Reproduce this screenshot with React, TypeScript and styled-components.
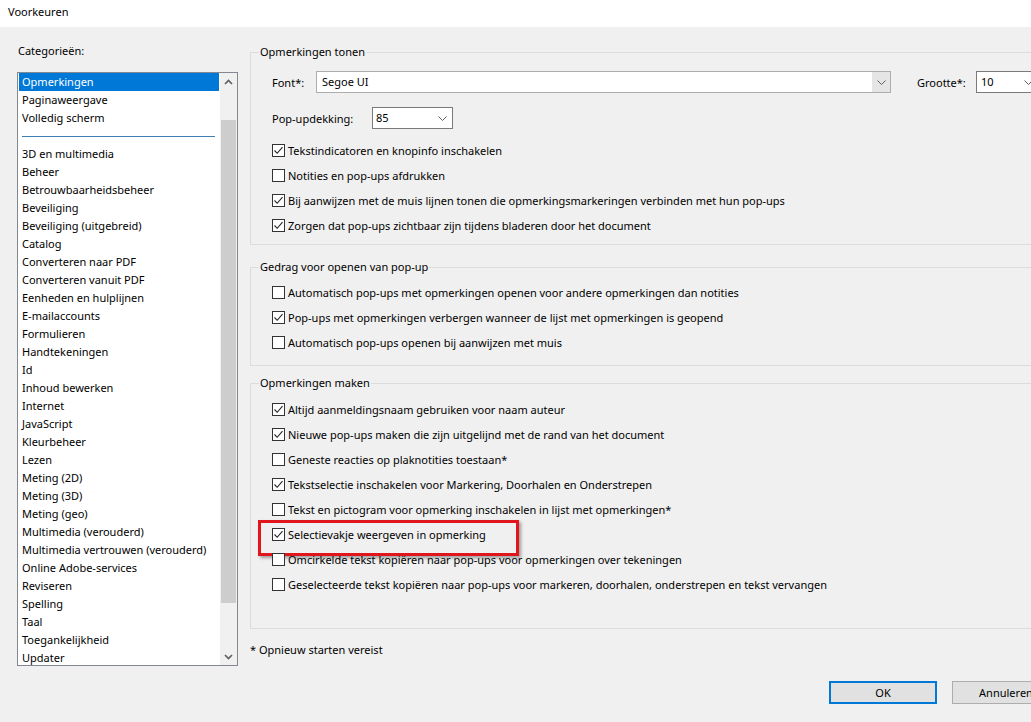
import React from "react";
import styled, { createGlobalStyle } from "styled-components";

const GlobalStyle = createGlobalStyle`
  html, body { margin: 0; padding: 0; width: 1031px; height: 722px; overflow: hidden; background: #f0f0f0; }
  body { font-family: "Noto Sans", "Open Sans", sans-serif; font-size: 11px; color: #000; }
  #root { height: 100%; }
  * { box-sizing: border-box; }
`;

const Window = styled.div`
  display: flex;
  flex-direction: column;
  width: 1031px;
  height: 722px;
  overflow: hidden;
`;

const TitleBar = styled.div`
  height: 27px;
  flex-shrink: 0;
  background: #fff;
  padding: 4px 0 0 8px;
  line-height: 16px;
`;

const Main = styled.div`
  display: flex;
  gap: 12px;
  padding-left: 17px;
  flex: 1;
  min-height: 0;
`;

const LeftColumn = styled.div`
  width: 221px;
  flex-shrink: 0;
  padding-top: 16px;
  display: flex;
  flex-direction: column;
`;

const SectionLabel = styled.div`
  line-height: 16px;
  margin-left: 1px;
`;

const ListBox = styled.div`
  margin-top: 13px;
  height: 594px;
  border: 1px solid #828790;
  background: #fff;
  display: flex;
`;

const ListItems = styled.div`
  flex: 1;
  padding-left: 1px;
  overflow: hidden;
`;

const ListItem = styled.div<{ $selected?: boolean }>`
  width: 200px;
  height: 18px;
  line-height: 18px;
  padding-left: 3px;
  white-space: nowrap;
  background: ${(p) => (p.$selected ? "#0078d7" : "transparent")};
  color: ${(p) => (p.$selected ? "#fff" : "#000")};
`;

const DividerRow = styled.div`
  height: 18px;
  display: flex;
  align-items: center;
`;

const DividerLine = styled.div`
  margin-left: 3px;
  width: 193px;
  height: 1px;
  background: #3d7eb5;
`;

const ScrollBar = styled.div`
  width: 17px;
  flex-shrink: 0;
  display: flex;
  flex-direction: column;
  background: #f0f0f0;
`;

const ScrollButton = styled.div`
  height: 17px;
  display: flex;
  align-items: center;
  justify-content: center;
`;

const ScrollTrack = styled.div`
  flex: 1;
`;

const ScrollThumb = styled.div`
  margin: 30px 1px 0;
  height: 483px;
  background: #cdcdcd;
`;

const RightColumn = styled.div`
  width: 830px;
  flex-shrink: 0;
  padding-top: 17px;
  display: flex;
  flex-direction: column;
`;

const GroupBox = styled.fieldset<{ $mt?: number }>`
  margin: ${(p) => p.$mt ?? 0}px 0 0 0;
  padding: 0;
  border: 1px solid #dcdcdc;
  min-width: 0;
`;

const GroupLegend = styled.legend`
  margin-left: 8px;
  padding: 0 1px;
  line-height: 16px;
`;

const GroupBody = styled.div<{ $pt: number; $pb: number }>`
  padding: ${(p) => p.$pt}px 0 ${(p) => p.$pb}px 21px;
`;

const FieldRow = styled.div<{ $mt?: number }>`
  display: flex;
  align-items: center;
  height: 22px;
  margin-top: ${(p) => p.$mt ?? 0}px;
`;

const FieldLabel = styled.span<{ $w: number; $ml?: number }>`
  width: ${(p) => p.$w}px;
  margin-left: ${(p) => p.$ml ?? 0}px;
  flex-shrink: 0;
  white-space: nowrap;
`;

const Combo = styled.div<{ $w: number; $light?: boolean }>`
  width: ${(p) => p.$w}px;
  height: 22px;
  flex-shrink: 0;
  display: flex;
  align-items: stretch;
  border: 1px solid ${(p) => (p.$light ? "#adadad" : "#7a7a7a")};
  background: #fff;
`;

const ComboText = styled.span<{ $pl: number }>`
  flex: 1;
  padding-left: ${(p) => p.$pl}px;
  line-height: 20px;
  white-space: nowrap;
  overflow: hidden;
`;

const ComboArrow = styled.span<{ $gray?: boolean; $w: number }>`
  width: ${(p) => p.$w}px;
  display: flex;
  align-items: center;
  justify-content: center;
  background: ${(p) => (p.$gray ? "#e5e5e5" : "transparent")};
`;

const CheckList = styled.div<{ $mt?: number }>`
  margin-top: ${(p) => p.$mt ?? 0}px;
  display: flex;
  flex-direction: column;
`;

const CheckRow = styled.div`
  position: relative;
  display: flex;
  align-items: center;
  height: 25px;
  white-space: nowrap;
`;

const CheckBox = styled.span`
  width: 13px;
  height: 13px;
  flex-shrink: 0;
  margin-right: 3px;
  border: 1px solid #333;
  background: #fff;
  display: flex;
  align-items: center;
  justify-content: center;
`;

const Highlight = styled.span`
  position: absolute;
  left: -14px;
  top: -2px;
  width: 261px;
  height: 36px;
  border: 3px solid #e1161d;
  box-shadow: 2px 2px 3px rgba(0, 0, 0, 0.35);
  pointer-events: none;
`;

const Footnote = styled.div`
  margin-top: 13px;
  line-height: 16px;
`;

const ButtonRow = styled.div`
  display: flex;
  justify-content: flex-end;
  gap: 15px;
  margin-top: 23px;
  padding-right: 20px;
`;

const Button = styled.button<{ $default?: boolean }>`
  width: 108px;
  height: 23px;
  font: inherit;
  font-size: 11px;
  color: #000;
  background: #e1e1e1;
  border: ${(p) => (p.$default ? "2px solid #0078d7" : "1px solid #adadad")};
  padding: 0;
`;

const Chevron = () => (
  <svg width="9" height="5" viewBox="0 0 9 5">
    <path d="M0.5 0.5 L4.5 4.5 L8.5 0.5" fill="none" stroke="#606060" strokeWidth="1" />
  </svg>
);

const ScrollChevron = ({ up }: { up?: boolean }) => (
  <svg width="9" height="6" viewBox="0 0 9 6">
    <path
      d={up ? "M1 5 L4.5 1.5 L8 5" : "M1 1 L4.5 4.5 L8 1"}
      fill="none"
      stroke="#606060"
      strokeWidth="1.7"
    />
  </svg>
);

const CheckMark = () => (
  <svg width="11" height="11" viewBox="0 0 11 11">
    <path d="M1.5 5.5 L4.2 8.3 L9.5 2.2" fill="none" stroke="#222" strokeWidth="1.1" />
  </svg>
);

type Opt = { label: string; checked: boolean; highlight?: boolean };

const Check = ({ label, checked, highlight }: Opt) => (
  <CheckRow>
    <CheckBox>{checked && <CheckMark />}</CheckBox>
    <span>{label}</span>
    {highlight && <Highlight />}
  </CheckRow>
);

const topCategories = ["Opmerkingen", "Paginaweergave", "Volledig scherm"];
const categories = [
  "3D en multimedia",
  "Beheer",
  "Betrouwbaarheidsbeheer",
  "Beveiliging",
  "Beveiliging (uitgebreid)",
  "Catalog",
  "Converteren naar PDF",
  "Converteren vanuit PDF",
  "Eenheden en hulplijnen",
  "E-mailaccounts",
  "Formulieren",
  "Handtekeningen",
  "Id",
  "Inhoud bewerken",
  "Internet",
  "JavaScript",
  "Kleurbeheer",
  "Lezen",
  "Meting (2D)",
  "Meting (3D)",
  "Meting (geo)",
  "Multimedia (verouderd)",
  "Multimedia vertrouwen (verouderd)",
  "Online Adobe-services",
  "Reviseren",
  "Spelling",
  "Taal",
  "Toegankelijkheid",
  "Updater",
];

const group1: Opt[] = [
  { label: "Tekstindicatoren en knopinfo inschakelen", checked: true },
  { label: "Notities en pop-ups afdrukken", checked: false },
  { label: "Bij aanwijzen met de muis lijnen tonen die opmerkingsmarkeringen verbinden met hun pop-ups", checked: true },
  { label: "Zorgen dat pop-ups zichtbaar zijn tijdens bladeren door het document", checked: true },
];

const group2: Opt[] = [
  { label: "Automatisch pop-ups met opmerkingen openen voor andere opmerkingen dan notities", checked: false },
  { label: "Pop-ups met opmerkingen verbergen wanneer de lijst met opmerkingen is geopend", checked: true },
  { label: "Automatisch pop-ups openen bij aanwijzen met muis", checked: false },
];

const group3: Opt[] = [
  { label: "Altijd aanmeldingsnaam gebruiken voor naam auteur", checked: true },
  { label: "Nieuwe pop-ups maken die zijn uitgelijnd met de rand van het document", checked: true },
  { label: "Geneste reacties op plaknotities toestaan*", checked: false },
  { label: "Tekstselectie inschakelen voor Markering, Doorhalen en Onderstrepen", checked: true },
  { label: "Tekst en pictogram voor opmerking inschakelen in lijst met opmerkingen*", checked: false },
  { label: "Selectievakje weergeven in opmerking", checked: true, highlight: true },
  { label: "Omcirkelde tekst kopiëren naar pop-ups voor opmerkingen over tekeningen", checked: false },
  { label: "Geselecteerde tekst kopiëren naar pop-ups voor markeren, doorhalen, onderstrepen en tekst vervangen", checked: false },
];

export default function App() {
  return (
    <>
      <GlobalStyle />
      <Window>
        <TitleBar>Voorkeuren</TitleBar>
        <Main>
          <LeftColumn>
            <SectionLabel>Categorieën:</SectionLabel>
            <ListBox>
              <ListItems>
                {topCategories.map((c, i) => (
                  <ListItem key={c} $selected={i === 0}>
                    {c}
                  </ListItem>
                ))}
                <DividerRow>
                  <DividerLine />
                </DividerRow>
                {categories.map((c) => (
                  <ListItem key={c}>{c}</ListItem>
                ))}
              </ListItems>
              <ScrollBar>
                <ScrollButton>
                  <ScrollChevron up />
                </ScrollButton>
                <ScrollTrack>
                  <ScrollThumb />
                </ScrollTrack>
                <ScrollButton>
                  <ScrollChevron />
                </ScrollButton>
              </ScrollBar>
            </ListBox>
          </LeftColumn>

          <RightColumn>
            <GroupBox>
              <GroupLegend>Opmerkingen tonen</GroupLegend>
              <GroupBody $pt={11} $pb={6}>
                <FieldRow>
                  <FieldLabel $w={44}>Font*:</FieldLabel>
                  <Combo $w={575} $light>
                    <ComboText $pl={5}>Segoe UI</ComboText>
                    <ComboArrow $gray $w={18}>
                      <Chevron />
                    </ComboArrow>
                  </Combo>
                  <FieldLabel $w={59} $ml={26}>
                    Grootte*:
                  </FieldLabel>
                  <Combo $w={62}>
                    <ComboText $pl={4}>10</ComboText>
                    <ComboArrow $w={18}>
                      <Chevron />
                    </ComboArrow>
                  </Combo>
                </FieldRow>
                <FieldRow $mt={14}>
                  <FieldLabel $w={100}>Pop-updekking:</FieldLabel>
                  <Combo $w={81}>
                    <ComboText $pl={3}>85</ComboText>
                    <ComboArrow $w={20}>
                      <Chevron />
                    </ComboArrow>
                  </Combo>
                </FieldRow>
                <CheckList $mt={9}>
                  {group1.map((o) => (
                    <Check key={o.label} {...o} />
                  ))}
                </CheckList>
              </GroupBody>
            </GroupBox>

            <GroupBox $mt={14}>
              <GroupLegend>Gedrag voor openen van pop-up</GroupLegend>
              <GroupBody $pt={5} $pb={10}>
                <CheckList>
                  {group2.map((o) => (
                    <Check key={o.label} {...o} />
                  ))}
                </CheckList>
              </GroupBody>
            </GroupBox>

            <GroupBox $mt={9}>
              <GroupLegend>Opmerkingen maken</GroupLegend>
              <GroupBody $pt={6} $pb={31}>
                <CheckList>
                  {group3.map((o) => (
                    <Check key={o.label} {...o} />
                  ))}
                </CheckList>
              </GroupBody>
            </GroupBox>

            <Footnote>* Opnieuw starten vereist</Footnote>
            <ButtonRow>
              <Button $default>OK</Button>
              <Button>Annuleren</Button>
            </ButtonRow>
          </RightColumn>
        </Main>
      </Window>
    </>
  );
}
